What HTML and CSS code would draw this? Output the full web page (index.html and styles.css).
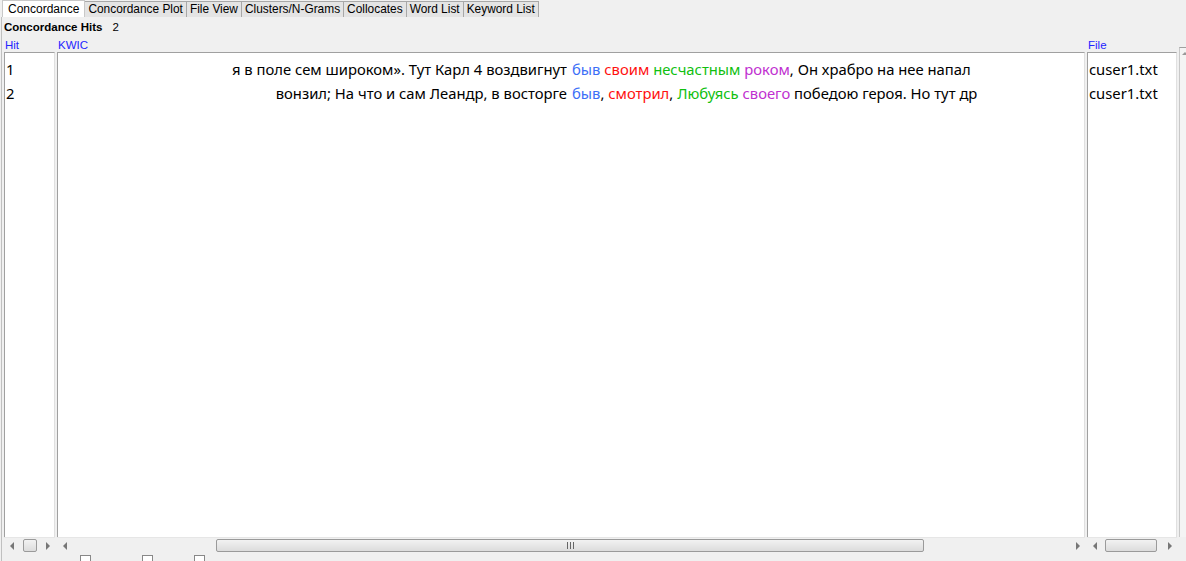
FILE: index.html
```html
<!DOCTYPE html>
<html>
<head>
<meta charset="utf-8">
<link rel="stylesheet" href="styles.css">
</head>
<body>
<div class="app">
  <div class="tabs">
    <div class="tab active">Concordance</div>
    <div class="tab">Concordance Plot</div>
    <div class="tab">File View</div>
    <div class="tab">Clusters/N-Grams</div>
    <div class="tab">Collocates</div>
    <div class="tab">Word List</div>
    <div class="tab">Keyword List</div>
  </div>
  <div class="main">
    <div class="hits"><b>Concordance Hits</b><span class="count">2</span></div>
    <div class="grid">
      <div class="head">Hit</div>
      <div class="head">KWIC</div>
      <div class="head">File</div>
      <div class="vscroll"><span class="up"></span></div>

      <div class="panel hit-panel">
        <div class="row">1</div>
        <div class="row">2</div>
      </div>
      <div class="panel kwic-panel">
        <div class="kwic-row">
          <span class="left">я в поле сем широком». Тут Карл 4 воздвигнут</span>
          <span class="right"><span class="c1">быв</span> <span class="c2">своим</span> <span class="c3">несчастным</span> <span class="c4">роком</span>, Он храбро на нее напал</span>
        </div>
        <div class="kwic-row">
          <span class="left">вонзил; На что и сам Леандр, в восторге</span>
          <span class="right"><span class="c1">быв</span>, <span class="c2">смотрил</span>, <span class="c3">Любуясь</span> <span class="c4">своего</span> победою героя. Но тут др</span>
        </div>
      </div>
      <div class="panel file-panel">
        <div class="row">cuser1.txt</div>
        <div class="row">cuser1.txt</div>
      </div>

      <div class="hscroll">
        <span class="arr l"></span><span class="track"><span class="thumb" style="margin-left:3px;width:14px"></span></span><span class="arr r"></span>
      </div>
      <div class="hscroll">
        <span class="arr l"></span><span class="track"><span class="thumb" style="margin-left:143px;width:708px"><span class="grip"></span></span></span><span class="arr r"></span>
      </div>
      <div class="hscroll">
        <span class="arr l"></span><span class="track"><span class="thumb" style="margin-left:2px;width:52px"></span></span><span class="arr r"></span>
      </div>
      <div class="corner"></div>
    </div>
    <div class="bottom">
      <span class="cb" style="margin-left:78px"></span>
      <span class="cb" style="margin-left:51px"></span>
      <span class="cb" style="margin-left:41px"></span>
    </div>
  </div>
</div>
</body>
</html>
```
FILE: styles.css
```css
html, body {
  margin: 0;
  padding: 0;
  background: #f0f0f0;
  width: 1186px;
  height: 561px;
  overflow: hidden;
  font-family: "Liberation Sans", Arial, sans-serif;
  font-size: 12px;
  color: #000;
}
.app {
  display: flex;
  flex-direction: column;
  height: 561px;
  overflow: hidden;
}
.tabs {
  display: flex;
  height: 17px;
  padding-left: 2px;
  align-items: flex-end;
  flex: none;
}
.tab {
  height: 16px;
  line-height: 15px;
  box-sizing: border-box;
  padding: 0 3px;
  border: 1px solid #a8a8a8;
  border-left: none;
  border-bottom: none;
  background: #e4e4e4;
  white-space: nowrap;
  font-size: 11.9px;
}
.tab.active {
  background: #ffffff;
  height: 17px;
  line-height: 16px;
  padding: 0 5px;
  border: 1px solid #c8c8c8;
  border-bottom: none;
  font-size: 12px;
}
.main {
  flex: 1;
  display: flex;
  flex-direction: column;
  border-left: 1px solid #c0c0c0;
  margin-left: 1px;
}
.hits {
  height: 20px;
  line-height: 20px;
  padding-left: 2px;
  font-size: 11.5px;
  flex: none;
}
.hits b { font-weight: bold; }
.count { margin-left: 10px; }
.grid {
  display: grid;
  grid-template-columns: 51px 1028px 90px 8px;
  column-gap: 2px;
  grid-template-rows: 15px 485px 16px;
  padding-left: 2px;
  flex: none;
}
.head {
  color: #2424ff;
  line-height: 16px;
  padding-left: 1px;
  font-size: 11.5px;
}
.panel {
  background: #fff;
  border-top: 1px solid #a0a0a0;
  border-left: 1px solid #a0a0a0;
  border-right: 1px solid #e0e0e0;
  box-sizing: border-box;
  font-family: "Noto Sans", "Open Sans", sans-serif;
  font-size: 14.8px;
  padding-top: 4px;
  overflow: hidden;
}
.row {
  height: 24px;
  line-height: 24px;
  padding-left: 1px;
  white-space: nowrap;
  overflow: hidden;
}
.kwic-row {
  display: grid;
  grid-template-columns: 509px 1fr;
  column-gap: 5px;
  height: 24px;
  line-height: 24px;
  white-space: nowrap;
  overflow: hidden;
}
.left { text-align: right; overflow: hidden; }
.right { overflow: hidden; }
.c1 { color: #3d6ff7; }
.c2 { color: #ff1010; }
.c3 { color: #10c010; }
.c4 { color: #c030d0; }
.vscroll {
  grid-column: 4;
  grid-row: 1 / span 2;
  background: #f4f4f4;
  border-left: 1px solid #c8c8c8;
  border-top: 1px solid #a0a0a0;
  margin-top: 10px;
  position: relative;
}
.up {
  position: absolute;
  left: 2px;
  top: 4px;
  width: 0; height: 0;
  border-left: 3px solid transparent;
  border-right: 3px solid transparent;
  border-bottom: 3px solid #999;
}
.hscroll {
  display: flex;
  align-items: center;
  background: #f0f0f0;
  border-top: 1px solid #e6e6e6;
  height: 16px;
  box-sizing: border-box;
}
.arr {
  width: 16px;
  height: 15px;
  position: relative;
  flex: none;
}
.arr::after {
  content: "";
  position: absolute;
  top: 4px;
  width: 0; height: 0;
  border-top: 4px solid transparent;
  border-bottom: 4px solid transparent;
}
.arr.l::after { left: 6px; border-right: 4px solid #777; }
.arr.r::after { left: 7px; border-left: 4px solid #777; }
.track {
  flex: 1;
  display: flex;
  align-items: center;
  height: 15px;
}
.thumb {
  height: 13px;
  box-sizing: border-box;
  border: 1px solid #9a9a9a;
  border-radius: 2px;
  background: linear-gradient(#f2f2f2, #dcdcdc);
  display: flex;
  justify-content: center;
  align-items: center;
  flex: none;
}
.grip {
  width: 7px;
  height: 7px;
  background: repeating-linear-gradient(90deg, #666 0 1px, transparent 1px 3px);
}
.corner { background: #f0f0f0; }
.bottom {
  display: flex;
  padding-top: 2px;
}
.cb {
  width: 11px;
  height: 11px;
  border: 1px solid #888;
  background: #fff;
  box-sizing: border-box;
  flex: none;
}
```
